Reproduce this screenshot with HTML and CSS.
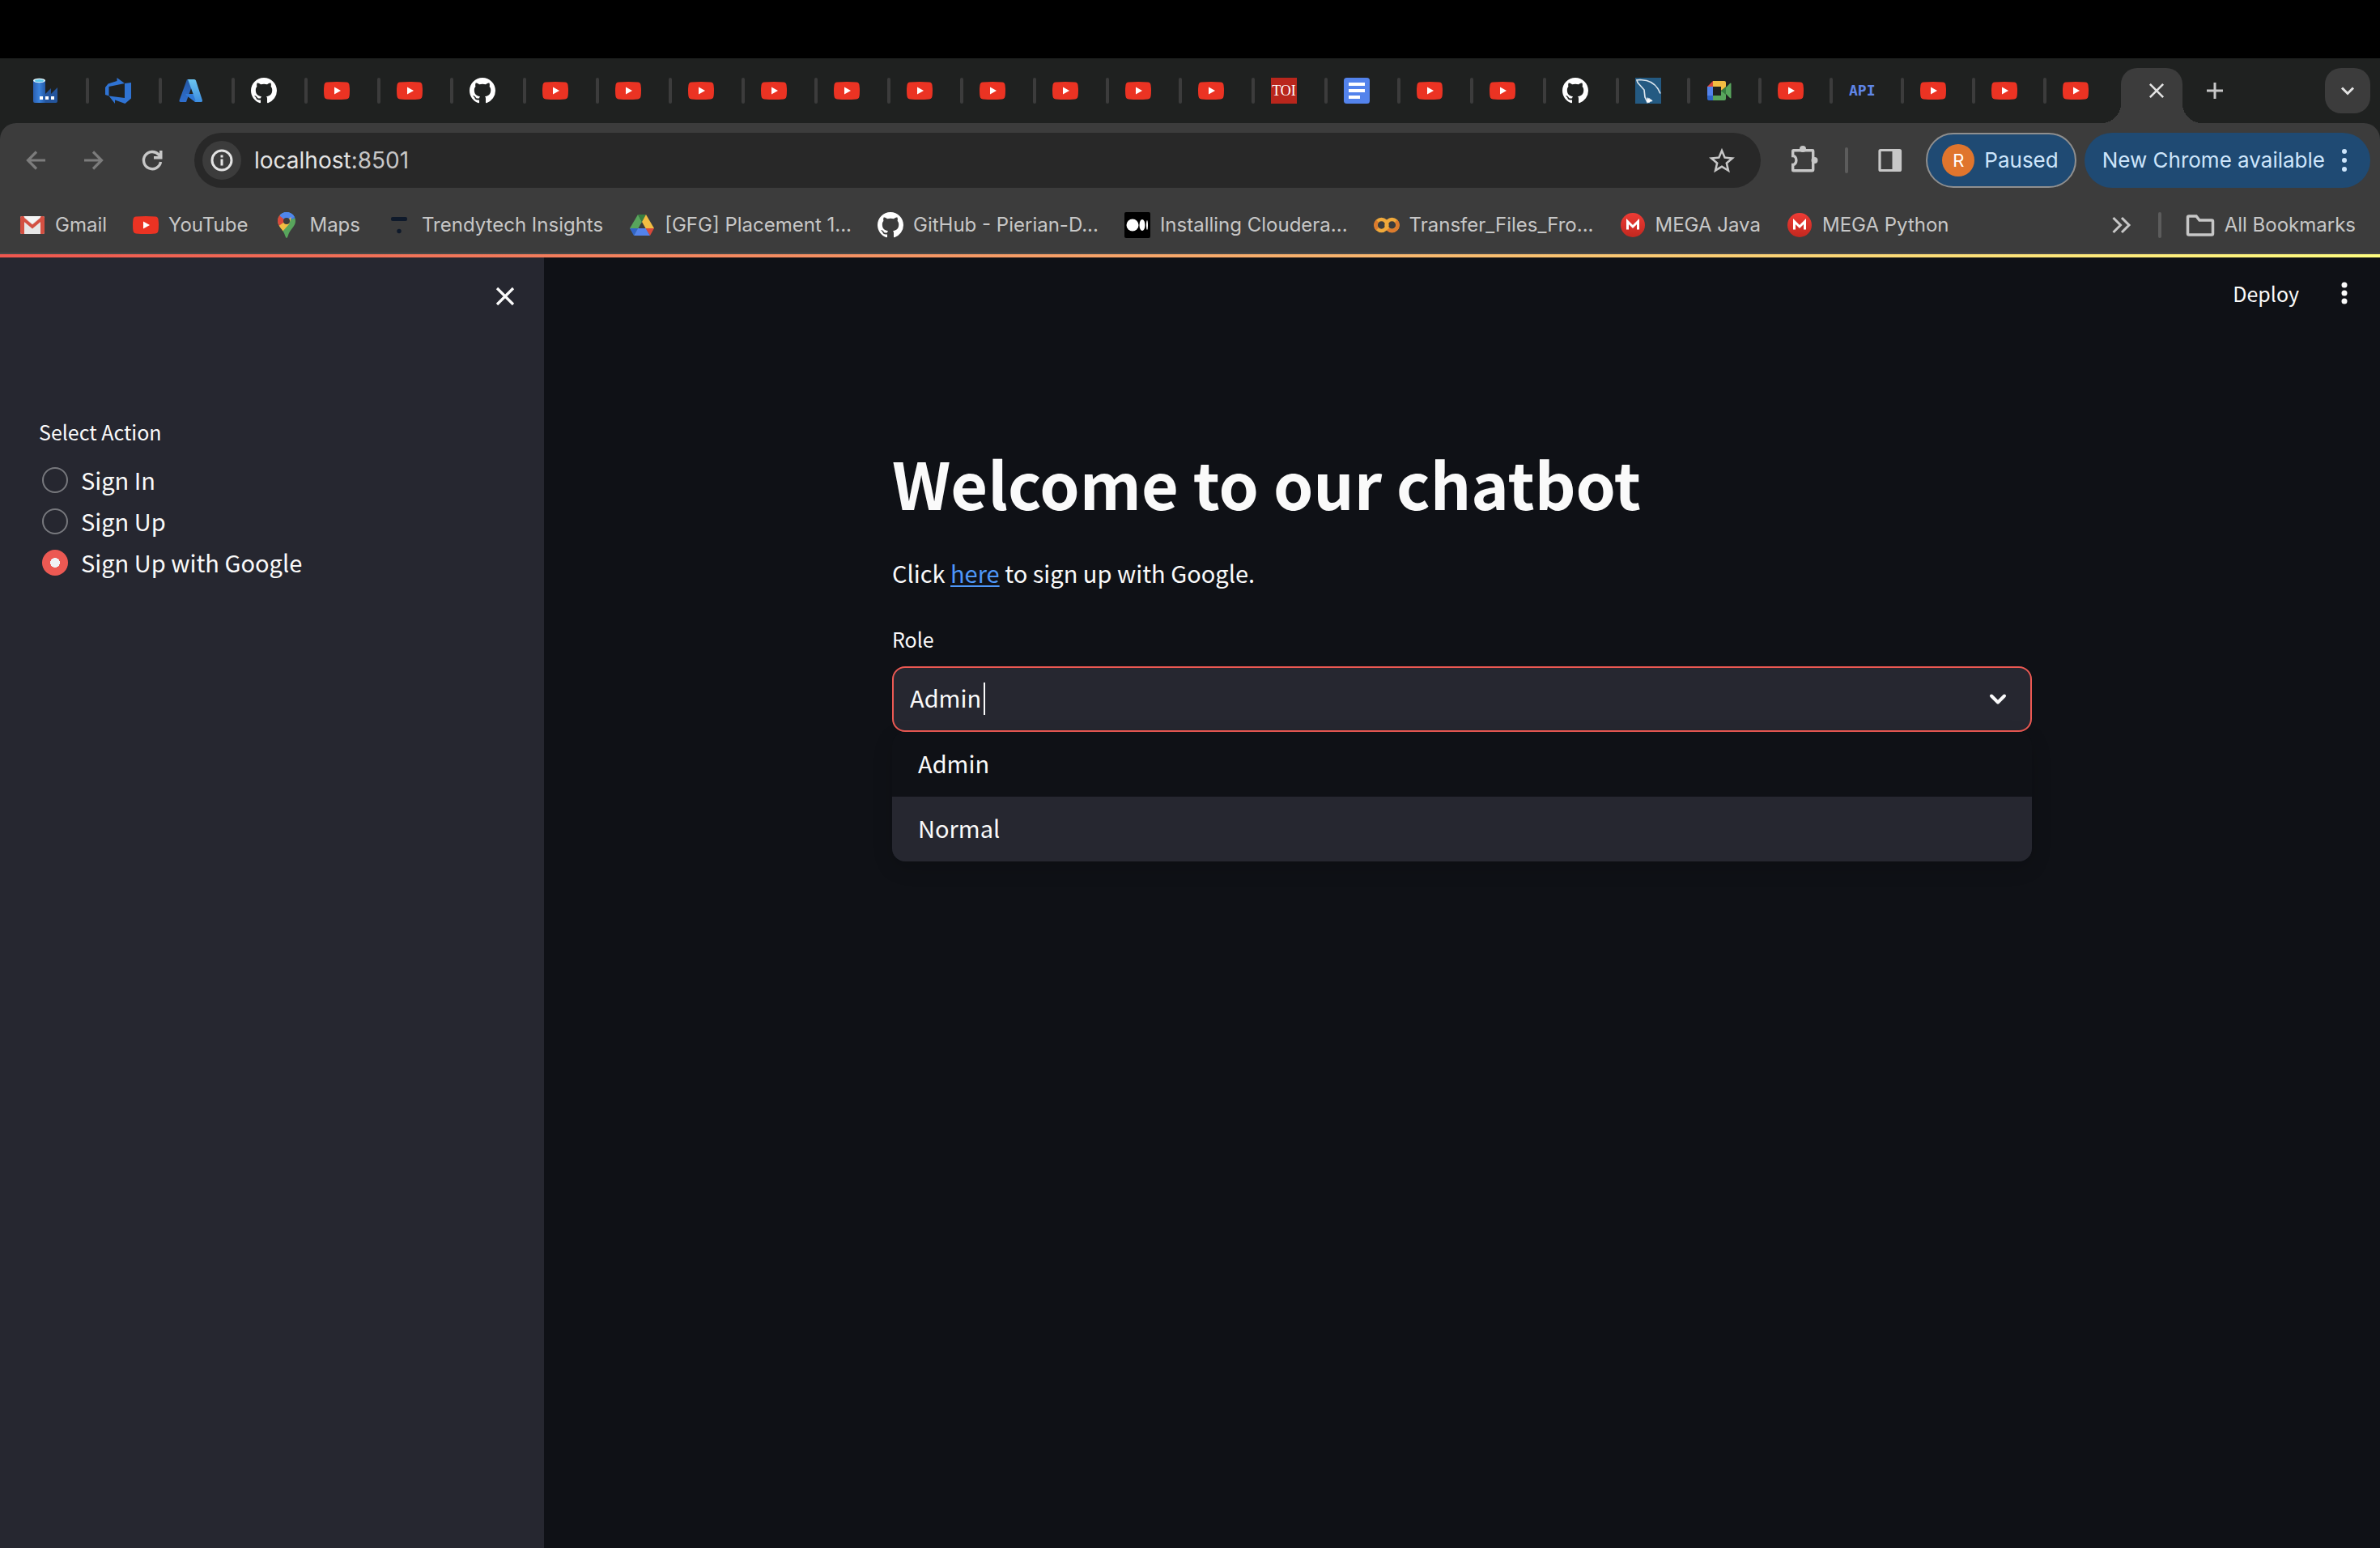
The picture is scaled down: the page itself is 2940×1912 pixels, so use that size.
FILE: index.html
```html
<!DOCTYPE html>
<html lang="en">
<head>
<meta charset="utf-8">
<title>localhost:8501</title>
<meta name="viewport" content="width=device-width, initial-scale=1">
<link rel="stylesheet" href="styles.css">
</head>
<body>
<svg class="sprite" aria-hidden="true">
  <linearGradient id="g-tower" x1="0" x2="1" y1="0" y2="0"><stop offset="0" stop-color="#2a5fb0"/><stop offset=".5" stop-color="#3a82dc"/><stop offset="1" stop-color="#2459a6"/></linearGradient>
  <linearGradient id="g-azl" x1="0" x2="0" y1="0" y2="1"><stop offset="0" stop-color="#2458a4"/><stop offset="1" stop-color="#2f6fcf"/></linearGradient>
  <linearGradient id="g-azr" x1="0" x2="0" y1="0" y2="1"><stop offset="0" stop-color="#6cc5f0"/><stop offset="1" stop-color="#3d8ee0"/></linearGradient>
  <linearGradient id="g-mega" x1="0" x2="0" y1="0" y2="1"><stop offset="0" stop-color="#ee3b35"/><stop offset="1" stop-color="#c2281f"/></linearGradient>
  <symbol id="youtube" viewBox="0 0 32 32"><path fill="#eb3323" d="M4 5.600Q16 4.400 28 5.600Q31 6 31.500 9Q32.500 16 31.500 23Q31 26 28 26.400Q16 27.600 4 26.400Q1 26 .5 23Q-.5 16 .5 9Q1 6 4 5.600z"/><path fill="#fff" d="M13 11.500l8 4.500-8 4.500z"/></symbol>
  <symbol id="github" viewBox="0 0 16 16"><path fill="#fff" d="M8 0C3.580 0 0 3.580 0 8c0 3.540 2.290 6.530 5.470 7.590.4.070.55-.17.55-.38 0-.19-.01-.82-.01-1.490-2.010.37-2.530-.49-2.690-.94-.09-.23-.48-.94-.82-1.130-.28-.15-.68-.52-.01-.53.63-.01 1.080.58 1.230.82.72 1.210 1.870.87 2.330.66.070-.52.28-.87.51-1.070-1.780-.2-3.640-.89-3.640-3.950 0-.87.31-1.590.82-2.150-.08-.2-.36-1.020.08-2.120 0 0 .67-.21 2.200.82.64-.18 1.320-.27 2-.27.68 0 1.360.09 2 .27 1.530-1.040 2.200-.82 2.200-.82.44 1.100.16 1.920.08 2.120.51.56.82 1.270.82 2.150 0 3.070-1.870 3.750-3.650 3.950.29.25.54.73.54 1.480 0 1.070-.01 1.930-.01 2.200 0 .21.15.46.55.38A8.013 8.013 0 0016 8c0-4.420-3.580-8-8-8z"/></symbol>
  <symbol id="factory" viewBox="0 0 32 32"><path fill="#24559d" d="M15 21l8-8v7l8-8v17q0 2-2 2H15z"/><path fill="url(#g-tower)" d="M1 3h15v28H3q-2 0-2-2z"/><ellipse cx="8.500" cy="3.500" rx="7.500" ry="2.700" fill="#e4f4fb"/><ellipse cx="8.500" cy="3.700" rx="5.500" ry="1.600" fill="#5fc8ea"/><path fill="#fff" d="M9 23h4v4H9zM16 23h4v4h-4zM23 23h4v4h-4z"/></symbol>
  <symbol id="devops" viewBox="0 0 32 32"><path fill="#2f73d3" d="M0 12l3.500-4.500L14.500 4V0L24 7 4.500 11v11.500L0 21zM24 7l8-1v19.500L24.500 32 12 27.500V32L4.500 22.500 24 25z"/></symbol>
  <symbol id="azure" viewBox="0 0 32 32"><path fill="url(#g-azl)" d="M11 2h9L10 30H3q-2 0-1.500-2z"/><path fill="#2e78d6" d="M10 20h12l4 10h-5l-12-9z"/><path fill="url(#g-azr)" d="M12 2h8q1.500 0 2 1.500L30 28q.5 2-1.500 2H20q2 0 1.500-2z"/></symbol>
  <symbol id="docs" viewBox="0 0 32 32"><rect width="32" height="32" rx="3.500" fill="#5383ec"/><path fill="#fff" d="M6 6h20v4H6zM6 14h20v4H6zM6 22h14v4H6z"/></symbol>
  <symbol id="mysql" viewBox="0 0 32 32"><path fill="#245a82" d="M0 0h32v32H0z"/><g fill="none" stroke="#dce6ee" stroke-width="1.700"><path d="M3 6l-1-3 4-.5 8 1q12 3 17 16M3 6l8 9 1 9 3 6 2-4 4 3"/></g><path fill="#fff" d="M15 24l2 3 4 1-4 3-3-1z"/></symbol>
  <symbol id="meet" viewBox="0 0 32 32"><path fill="#d9483b" d="M8 4v7H1z"/><path fill="#5383ec" d="M1 11h7v11H1z"/><path fill="#2f66c9" d="M1 22h7v6H3q-2 0-2-2z"/><path fill="#f2bd42" d="M8 4h14q2 0 2 2v6l-6 4v-5H8z"/><path fill="#58a55c" d="M8 22h10v-6l6 4v6q0 2-2 2H8z"/><path fill="#58a55c" d="M24 12l5-5q1.500-1 1.500.5v17q0 1.500-1.500.5l-5-5z"/><path fill="#377e40" d="M18 16l6-5v10z"/></symbol>
  <symbol id="gmail" viewBox="0 0 32 32"><rect x="1" y="5" width="30" height="22" rx="2" fill="#e6e6e6"/><path d="M1 7q0-2 2-2h3v22H3q-2 0-2-2zM26 5h3q2 0 2 2v18q0 2-2 2h-3z" fill="#d35042"/><path d="M5 5h22L16 14z" fill="#f5f5f5"/><path d="M3 7l13 11L29 7" fill="none" stroke="#d35042" stroke-width="4"/></symbol>
  <symbol id="maps" viewBox="0 0 32 32"><clipPath id="pin"><path d="M16 0c6.500 0 11 5 11 11 0 7-6.500 9-9.500 19q-1.500 4-3 0C11.500 20 5 18 5 11 5 5 9.500 0 16 0z"/></clipPath><g clip-path="url(#pin)"><path fill="#58a55c" d="M0 0h32v32H0z"/><path fill="#3f78e0" d="M8 0h20v7L16 11z"/><path fill="#d9483b" d="M0 0h8l8 11-9 8H0z"/><path fill="#4f86ec" d="M8-1h20l-1 6-11 6-8-6z"/><path fill="#f2bd42" d="M5 18L22 6l-3 9-9 10z"/></g><circle cx="16" cy="11" r="4" fill="#3c3c3c"/></symbol>
  <symbol id="trendy" viewBox="0 0 32 32"><rect x="6" y="6" width="20" height="5" rx="2" fill="#0f1a2b"/><circle cx="16" cy="23.500" r="2.700" fill="#0f1a2b"/></symbol>
  <symbol id="drive" viewBox="0 0 32 32"><path fill="#58a55c" d="M11 3l5 9-9.500 16.500L1 20z"/><path fill="#377e40" d="M11 3h10l-5 9z"/><path fill="#f2bd42" d="M21 3l10 17H20.500L16 12z"/><path fill="#5383ec" d="M11 20h10l5 9H6z"/><path fill="#3164c8" d="M1 20h10L6 29z"/><path fill="#d9483b" d="M20.500 20H31l-5 9z"/></symbol>
  <symbol id="medium" viewBox="0 0 32 32"><rect width="32" height="32" rx="2"/><g fill="#fff"><circle cx="10" cy="16" r="7.500"/><ellipse cx="22" cy="16" rx="3.500" ry="7"/><ellipse cx="28" cy="16" rx="1" ry="6"/></g></symbol>
  <symbol id="colab" viewBox="0 0 32 32"><g fill="none" stroke-width="4.500"><circle cx="9.500" cy="16" r="7" stroke="#f0a93b"/><path d="M4.500 21a7 7 0 0 1 0-10" stroke="#dd7b2d"/><circle cx="22.500" cy="16" r="7" stroke="#f0a93b"/><path d="M27.500 11a7 7 0 0 1-10 10" stroke="#dd7b2d"/></g></symbol>
  <symbol id="mega" viewBox="0 0 32 32"><circle cx="16" cy="16" r="15" fill="url(#g-mega)"/><path d="M9.500 21.500v-10L16 18l6.500-6.500v10" fill="none" stroke="#fff" stroke-width="3"/></symbol>
  <symbol id="close" viewBox="0 0 32 32"><path d="M6 6l20 20M26 6L6 26" fill="none" stroke="currentColor" stroke-width="3.200"/></symbol>
  <symbol id="dots" viewBox="0 0 32 32"><g fill="currentColor"><circle cx="16" cy="5" r="3"/><circle cx="16" cy="16" r="3"/><circle cx="16" cy="27" r="3"/></g></symbol>
</svg>

<div class="menu-strip"></div>

<header class="browser">
  <div class="tab-strip">
    <ul class="tabs">
      <li class="tab"><svg class="icon"><use href="#factory"/></svg></li>
      <li class="tab"><svg class="icon"><use href="#devops"/></svg></li>
      <li class="tab"><svg class="icon"><use href="#azure"/></svg></li>
      <li class="tab"><svg class="icon"><use href="#github"/></svg></li>
      <li class="tab"><svg class="icon"><use href="#youtube"/></svg></li>
      <li class="tab"><svg class="icon"><use href="#youtube"/></svg></li>
      <li class="tab"><svg class="icon"><use href="#github"/></svg></li>
      <li class="tab"><svg class="icon"><use href="#youtube"/></svg></li>
      <li class="tab"><svg class="icon"><use href="#youtube"/></svg></li>
      <li class="tab"><svg class="icon"><use href="#youtube"/></svg></li>
      <li class="tab"><svg class="icon"><use href="#youtube"/></svg></li>
      <li class="tab"><svg class="icon"><use href="#youtube"/></svg></li>
      <li class="tab"><svg class="icon"><use href="#youtube"/></svg></li>
      <li class="tab"><svg class="icon"><use href="#youtube"/></svg></li>
      <li class="tab"><svg class="icon"><use href="#youtube"/></svg></li>
      <li class="tab"><svg class="icon"><use href="#youtube"/></svg></li>
      <li class="tab"><svg class="icon"><use href="#youtube"/></svg></li>
      <li class="tab"><span class="icon toi">TOI</span></li>
      <li class="tab"><svg class="icon"><use href="#docs"/></svg></li>
      <li class="tab"><svg class="icon"><use href="#youtube"/></svg></li>
      <li class="tab"><svg class="icon"><use href="#youtube"/></svg></li>
      <li class="tab"><svg class="icon"><use href="#github"/></svg></li>
      <li class="tab narrow"><svg class="icon"><use href="#mysql"/></svg></li>
      <li class="tab narrow"><svg class="icon"><use href="#meet"/></svg></li>
      <li class="tab narrow"><svg class="icon"><use href="#youtube"/></svg></li>
      <li class="tab narrow"><span class="icon api">API</span></li>
      <li class="tab narrow"><svg class="icon"><use href="#youtube"/></svg></li>
      <li class="tab narrow"><svg class="icon"><use href="#youtube"/></svg></li>
      <li class="tab narrow last"><svg class="icon"><use href="#youtube"/></svg></li>
      <li class="tab-active"><button class="icon-button" aria-label="Close tab"><svg class="icon-small"><use href="#close"/></svg></button></li>
    </ul>
    <button class="icon-button new-tab" aria-label="New tab"><svg class="icon" viewBox="0 0 32 32"><path d="M16 6v20M6 16h20" fill="none" stroke="currentColor" stroke-width="3"/></svg></button>
    <button class="icon-button tab-search" aria-label="Search tabs"><svg class="icon" viewBox="0 0 32 32"><path d="M9 12.500l7 7 7-7" fill="none" stroke="currentColor" stroke-width="3"/></svg></button>
  </div>

  <div class="toolbar">
    <div class="nav-row">
      <div class="nav-buttons">
        <button class="icon-button dim" aria-label="Back"><svg class="icon" viewBox="0 0 32 32"><path d="M28 16H7M17 5.500L6.500 16 17 26.500" fill="none" stroke="currentColor" stroke-width="3.200"/></svg></button>
        <button class="icon-button dim" aria-label="Forward"><svg class="icon" viewBox="0 0 32 32"><path d="M4 16h21M15 5.500L25.500 16 15 26.500" fill="none" stroke="currentColor" stroke-width="3.200"/></svg></button>
        <button class="icon-button" aria-label="Reload"><svg class="icon" viewBox="0 0 32 32"><path d="M26.500 18a10.600 10.600 0 1 1-2.500-9l2.500 3" fill="none" stroke="currentColor" stroke-width="3.400"/><path d="M28.500 4v10.500H18v-3.500h7V4z" fill="currentColor"/></svg></button>
      </div>
      <div class="address">
        <button class="icon-button site-info" aria-label="Site information"><svg class="icon" viewBox="0 0 32 32"><circle cx="16" cy="16" r="12" fill="none" stroke="currentColor" stroke-width="3"/><path d="M14.500 14.500h3v8h-3zM14.500 9.500h3v3h-3z" fill="currentColor"/></svg></button>
        <span class="url">localhost<span class="port">:8501</span></span>
        <button class="icon-button" aria-label="Bookmark this page"><svg class="icon" viewBox="2 1.500 20 20"><path d="M22 9.240l-7.190-.62L12 2 9.190 8.630 2 9.240l5.460 4.730L5.820 21 12 17.270 18.180 21l-1.630-7.030L22 9.240zM12 15.400l-3.760 2.270 1-4.280-3.320-2.880 4.380-.38L12 6.100l1.710 4.040 4.380.38-3.320 2.880 1 4.280L12 15.400z" fill="currentColor"/></svg></button>
      </div>
      <div class="actions">
        <button class="icon-button" aria-label="Extensions"><svg class="icon-large" viewBox="0 0 36 36"><path d="M4.500 5.800H28q.7 0 .7.700v23.500q0 .7-.7.700H4.500q-.8 0-.8-.8V23.500a4.200 5.500 0 0 0 0-11V6.600q0-.8.800-.8z" fill="none" stroke="currentColor" stroke-width="3.400"/><circle cx="16" cy="4" r="4" fill="currentColor"/><circle cx="30.500" cy="18" r="4" fill="currentColor"/></svg></button>
        <span class="rule"></span>
        <button class="icon-button" aria-label="Side panel"><svg class="icon" viewBox="0 0 32 32"><path d="M4 3.500h23.500q1 0 1 1v23q0 1-1 1H4q-1 0-1-1v-23q0-1 1-1z" fill="none" stroke="currentColor" stroke-width="3.200"/><path d="M18.500 3H29v26H18.500z" fill="currentColor"/></svg></button>
        <button class="pill profile"><span class="avatar">R</span>Paused</button>
        <button class="pill update">New Chrome available<svg class="icon"><use href="#dots"/></svg></button>
      </div>
    </div>

    <nav class="bookmarks" aria-label="Bookmarks">
      <div class="bookmark-list">
        <a class="bookmark" href="#"><svg class="icon"><use href="#gmail"/></svg>Gmail</a>
        <a class="bookmark" href="#"><svg class="icon"><use href="#youtube"/></svg>YouTube</a>
        <a class="bookmark" href="#"><svg class="icon"><use href="#maps"/></svg>Maps</a>
        <a class="bookmark" href="#"><svg class="icon"><use href="#trendy"/></svg>Trendytech Insights</a>
        <a class="bookmark" href="#"><svg class="icon"><use href="#drive"/></svg>[GFG] Placement 1...</a>
        <a class="bookmark" href="#"><svg class="icon"><use href="#github"/></svg>GitHub - Pierian-D...</a>
        <a class="bookmark" href="#"><svg class="icon"><use href="#medium"/></svg>Installing Cloudera...</a>
        <a class="bookmark" href="#"><svg class="icon"><use href="#colab"/></svg>Transfer_Files_Fro...</a>
        <a class="bookmark" href="#"><svg class="icon"><use href="#mega"/></svg>MEGA Java</a>
        <a class="bookmark" href="#"><svg class="icon"><use href="#mega"/></svg>MEGA Python</a>
      </div>
      <button class="icon-button" aria-label="More bookmarks"><svg class="icon" viewBox="0 0 32 32"><path d="M6.500 7l9 9-9 9M17 7l9 9-9 9" fill="none" stroke="currentColor" stroke-width="3"/></svg></button>
      <span class="rule"></span>
      <a class="bookmark" href="#"><svg class="icon-large" viewBox="0 0 36 36"><path d="M4 7h9l4 5h15q1.500 0 1.500 1.500v15q0 1.500-1.500 1.500H4q-1.500 0-1.500-1.500v-20Q2.500 7 4 7z" fill="none" stroke="currentColor" stroke-width="3.500"/></svg>All Bookmarks</a>
    </nav>
  </div>
</header>

<div class="app">
  <aside class="sidebar">
    <button class="icon-button sidebar-close" aria-label="Close sidebar"><svg class="icon"><use href="#close"/></svg></button>
    <fieldset class="radio-group">
      <legend class="label">Select Action</legend>
      <label class="radio"><input type="radio" name="action">Sign In</label>
      <label class="radio"><input type="radio" name="action">Sign Up</label>
      <label class="radio"><input type="radio" name="action" checked>Sign Up with Google</label>
    </fieldset>
  </aside>

  <div class="page">
    <div class="app-header">
      <button class="deploy">Deploy</button>
      <button class="icon-button" aria-label="Main menu"><svg class="icon-menu" viewBox="0 0 32 28"><g fill="currentColor"><circle cx="16" cy="4" r="3.500"/><circle cx="16" cy="14" r="3.500"/><circle cx="16" cy="24" r="3.500"/></g></svg></button>
    </div>
    <main class="content">
      <h1>Welcome to our chatbot</h1>
      <p>Click <a href="#">here</a> to sign up with Google.</p>
      <label class="label" for="role">Role</label>
      <div class="select-box">
        <select id="role"><option selected>Admin</option><option>Normal</option></select>
        <span class="caret"></span>
        <svg class="chevron" viewBox="0 0 32 32" aria-hidden="true"><path d="M8 12.500l8 8 8-8" fill="none" stroke="currentColor" stroke-width="4" stroke-linecap="round" stroke-linejoin="round"/></svg>
        <ul class="options" role="listbox" aria-label="Role">
          <li role="option" aria-selected="true">Admin</li>
          <li role="option" aria-selected="false" class="highlighted">Normal</li>
        </ul>
      </div>
    </main>
  </div>
</div>
</body>
</html>
```
FILE: styles.css
```css
* { box-sizing: border-box; }

body {
  margin: 0;
  min-height: 100vh;
  display: flex;
  flex-direction: column;
  background: #0f1116;
  color: #fafafa;
  font-family: "Noto Sans CJK SC", "Noto Sans", sans-serif;
  font-size: 29px;
  line-height: 51px;
}

button, select { font: inherit; color: inherit; }
ul { margin: 0; padding: 0; list-style: none; }

.sprite { position: absolute; width: 0; height: 0; }
.icon { display: block; width: 32px; height: 32px; flex: none; }
.icon-small { display: block; width: 26px; height: 26px; flex: none; }
.icon-large { display: block; width: 36px; height: 36px; flex: none; }
.icon-button {
  display: flex;
  align-items: center;
  justify-content: center;
  flex: none;
  padding: 0;
  border: 0;
  background: none;
}

/* Browser window */
.menu-strip { height: 72px; background: #000; }
.browser {
  background: #1f2120;
  color: #c7c7c7;
  font-family: Inter, "Liberation Sans", sans-serif;
  font-size: 24px;
  line-height: 32px;
}

.tab-strip {
  display: flex;
  align-items: center;
  height: 80px;
  padding: 0 12px 0 20px;
}
.tabs { display: flex; align-self: stretch; align-items: center; }
.tab {
  display: flex;
  align-items: center;
  justify-content: space-between;
  width: 90px;
  padding-left: 20px;
}
.tab.narrow { width: 88px; }
.tab::after {
  content: "";
  width: 4px;
  height: 32px;
  border-radius: 2px;
  background: #3c3c3c;
}
.tab.last::after { background: none; }
.tab-active {
  position: relative;
  display: flex;
  align-items: center;
  align-self: flex-end;
  justify-content: center;
  width: 76px;
  height: 68px;
  margin-left: 4px;
  padding: 0 0 12px 12px;
  border-radius: 20px 20px 0 0;
  background: #3c3c3c;
  color: #e3e3e3;
}
.tab-active::before,
.tab-active::after {
  content: "";
  position: absolute;
  bottom: 0;
  width: 24px;
  height: 24px;
}
.tab-active::before { right: 100%; background: radial-gradient(circle at 0 0, transparent 24px, #3c3c3c 24px); }
.tab-active::after { left: 100%; background: radial-gradient(circle at 100% 0, transparent 24px, #3c3c3c 24px); }
.new-tab { margin-left: 24px; }
.tab-search {
  width: 56px;
  height: 56px;
  margin-left: auto;
  border-radius: 20px;
  background: #3c3c3c;
  color: #e3e3e3;
}
.toi {
  background: #b9261c;
  color: #fff;
  font-family: "Liberation Serif", serif;
  font-size: 18px;
  text-align: center;
}
.api {
  color: #5f86e8;
  font-family: "DejaVu Sans Mono", monospace;
  font-size: 18px;
  font-weight: 700;
}

.toolbar {
  border-bottom: 2px solid #474747;
  border-radius: 20px 20px 0 0;
  background: #3c3c3c;
}
.nav-row {
  display: flex;
  align-items: center;
  gap: 36px;
  padding: 12px 12px 12px 28px;
}
.nav-buttons { display: flex; gap: 40px; }
.dim { color: #7c7c7c; }
.address {
  display: flex;
  align-items: center;
  flex: 1;
  height: 68px;
  padding: 0 32px 0 10px;
  border-radius: 34px;
  background: #282828;
}
.site-info {
  width: 48px;
  height: 48px;
  margin-right: 16px;
  border-radius: 50%;
  background: #3c3c3c;
  color: #e3e3e3;
}
.url { flex: 1; color: #e3e3e3; font-size: 28px; }
.port { color: #c7c7c7; }
.actions { display: flex; align-items: center; }
.rule { width: 4px; height: 32px; border-radius: 2px; background: #5c5c5c; }
.actions .rule { margin: 0 36px 0 32px; }
.pill {
  display: flex;
  align-items: center;
  height: 68px;
  padding: 0;
  border: 0;
  border-radius: 34px;
  background: #1f4a73;
  color: #cde5fb;
  font-size: 26px;
}
.profile {
  gap: 12px;
  margin: 0 10px 0 28px;
  padding: 0 20px 0 18px;
  border: 2px solid #8f8f8f;
}
.avatar {
  width: 40px;
  height: 40px;
  border-radius: 50%;
  background: #e0752d;
  color: #fff;
  font-size: 22px;
  line-height: 40px;
  text-align: center;
}
.update { gap: 8px; padding: 0 16px 0 22px; }

.bookmarks {
  display: flex;
  align-items: center;
  height: 68px;
  padding: 0 30px 0 24px;
}
.bookmark-list { display: flex; gap: 32px; flex: 1; }
.bookmark {
  display: flex;
  align-items: center;
  gap: 12px;
  color: inherit;
  text-decoration: none;
  white-space: nowrap;
}
.bookmarks .rule { margin: 0 30px; }

/* Streamlit app */
.app { position: relative; display: flex; flex: 1; padding-top: 4px; }
.app::before {
  content: "";
  position: absolute;
  inset: 0 0 auto;
  height: 4px;
  background: linear-gradient(90deg, #ef574f, #f7a96b 50%, #fffd80);
}
.sidebar {
  flex: none;
  width: 672px;
  padding: 32px 32px 48px 48px;
  background: #262730;
}
.sidebar-close { margin-left: auto; }
.radio-group { margin: 131px 0 0; padding: 0; border: 0; }
.label { display: block; padding: 0; margin-bottom: 14px; font-size: 25px; line-height: 40px; }
.radio { display: flex; align-items: center; gap: 16px; }
.radio input {
  appearance: none;
  width: 32px;
  height: 32px;
  margin: 0 0 0 4px;
  border: 2px solid #77787d;
  border-radius: 50%;
}
.radio input:checked {
  border: 0;
  background: radial-gradient(circle, #f0f2f6 6px, #ec5953 6px);
}

.page { flex: 1; }
.app-header {
  display: flex;
  align-items: center;
  justify-content: flex-end;
  gap: 40px;
  height: 88px;
  padding-right: 28px;
}
.deploy { padding: 0; border: 0; background: none; font-size: 25px; line-height: 40px; }
.icon-menu { width: 32px; height: 28px; }
.content { max-width: 1408px; margin: 0 auto; padding-top: 137px; }
h1 { margin: 0 0 33px; font-size: 79px; line-height: 106px; font-weight: 700; }
p { margin: 0 0 36px; }
p a { color: #4e97f8; text-underline-offset: 3px; text-decoration-thickness: 2px; }
.select-box {
  position: relative;
  height: 81px;
}
.select-box select {
  width: 100%;
  height: 100%;
  padding: 0 20px 4px;
  appearance: none;
  border: 2px solid #ec5953;
  border-radius: 16px;
  outline: 0;
  background: #262730;
}
.caret { position: absolute; left: 113px; top: 20px; width: 2px; height: 40px; background: #fafafa; }
.chevron { position: absolute; right: 26px; top: 24px; width: 32px; height: 32px; }
.options {
  position: absolute;
  inset: 100% 0 auto;
  border-radius: 16px;
  background: #0f1116;
  box-shadow: 0 8px 24px rgba(0, 0, 0, .16);
  overflow: hidden;
}
.options li { height: 80px; padding: 0 32px; line-height: 76px; }
.highlighted { background: #262730; }
```
